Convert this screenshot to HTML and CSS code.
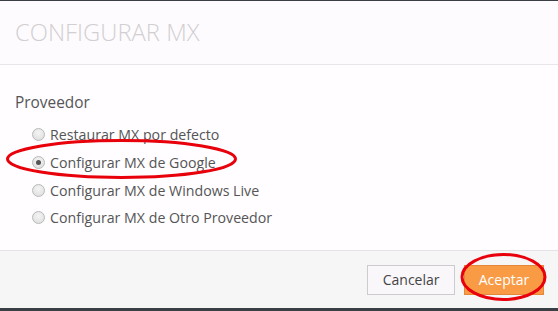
FILE: index.html
```html
<!DOCTYPE html>
<html lang="es">
<head>
	<meta charset="UTF-8">
	<title>Configurar MX</title>
	<link rel="stylesheet" href="styles.css">
</head>
<body>
	<div class="modal">
		<div class="modal-header">
			<h3>CONFIGURAR MX</h3>
		</div>

		<div class="modal-body">
			<div class="label">Proveedor</div>
			<div class="options">
				<label><input type="radio" name="mx" value="default"> Restaurar MX por defecto</label>
				<label><input type="radio" name="mx" value="google" checked> Configurar MX de Google</label>
				<label><input type="radio" name="mx" value="live"> Configurar MX de Windows Live</label>
				<label><input type="radio" name="mx" value="other"> Configurar MX de Otro Proveedor</label>
			</div>
		</div>

		<div class="modal-footer">
			<button type="button" class="btn">Cancelar</button>
			<button type="button" class="btn btn-primary">Aceptar</button>
		</div>
	</div>

	<svg class="marks" width="558" height="311" viewBox="0 0 558 311">
		<ellipse cx="121.5" cy="159" rx="114" ry="18.5" />
		<ellipse cx="503.5" cy="277" rx="41.5" ry="22.5" />
	</svg>
</body>
</html>
```

FILE: styles.css
```css
html, body {
	margin: 0;
	height: 100%;
}
body {
	background: #3a3f45;
	font-family: "Open Sans", "DejaVu Sans", sans-serif;
	overflow: hidden;
}
.modal {
	margin-top: 1px;
	height: 307px;
	background: #fff;
	display: flex;
	flex-direction: column;
}
.modal-header {
	height: 48px;
	padding: 15px 15px 0;
	background: #fdfbfd;
	border-bottom: 1px solid #e8e6e8;
}
.modal-header h3 {
	margin: 0;
	font-size: 23.8px;
	font-weight: 300;
	line-height: 33px;
	color: #d2cfd2;
}
.modal-body {
	flex: 1;
	padding: 28px 15px 0;
	background: #fffdff;
}
.modal-body .label {
	font-size: 15.4px;
	line-height: 20px;
	color: #555;
}
.options {
	display: flex;
	flex-direction: column;
	padding: 8px 0 0 17px;
}
.options label {
	display: flex;
	align-items: center;
	gap: 5px;
	height: 27.7px;
	font-size: 14.2px;
	color: #555;
}
.options input {
	appearance: none;
	margin: 0;
	width: 13px;
	height: 13px;
	border: 1px solid #b9b9b9;
	border-radius: 50%;
	background: radial-gradient(circle at 50% 35%, #f4f4f4 0, #dcdcdc 100%);
	position: relative;
}
.options input:checked::after {
	content: "";
	position: absolute;
	top: 3px;
	left: 3px;
	width: 5px;
	height: 5px;
	border-radius: 50%;
	background: #555;
}
.modal-footer {
	height: 57px;
	border-top: 1px solid #e3e3e3;
	background: #f6f6f6;
	display: flex;
	justify-content: flex-end;
	align-items: center;
	gap: 9px;
	padding-right: 14px;
}
.btn {
	height: 30px;
	padding: 0 14.5px;
	font-family: inherit;
	font-size: 14px;
	color: #444;
	background: #faf7fa;
	border: 1px solid #cdcbcd;
	border-radius: 0;
}
.btn-primary {
	width: 80px;
	padding: 0;
	color: #fff;
	background: #f99b45;
	border-color: #e3873a;
}
.marks {
	position: absolute;
	top: 0;
	left: 0;
	pointer-events: none;
}
.marks ellipse {
	fill: none;
	stroke: #e8000b;
	stroke-width: 3;
}
```
